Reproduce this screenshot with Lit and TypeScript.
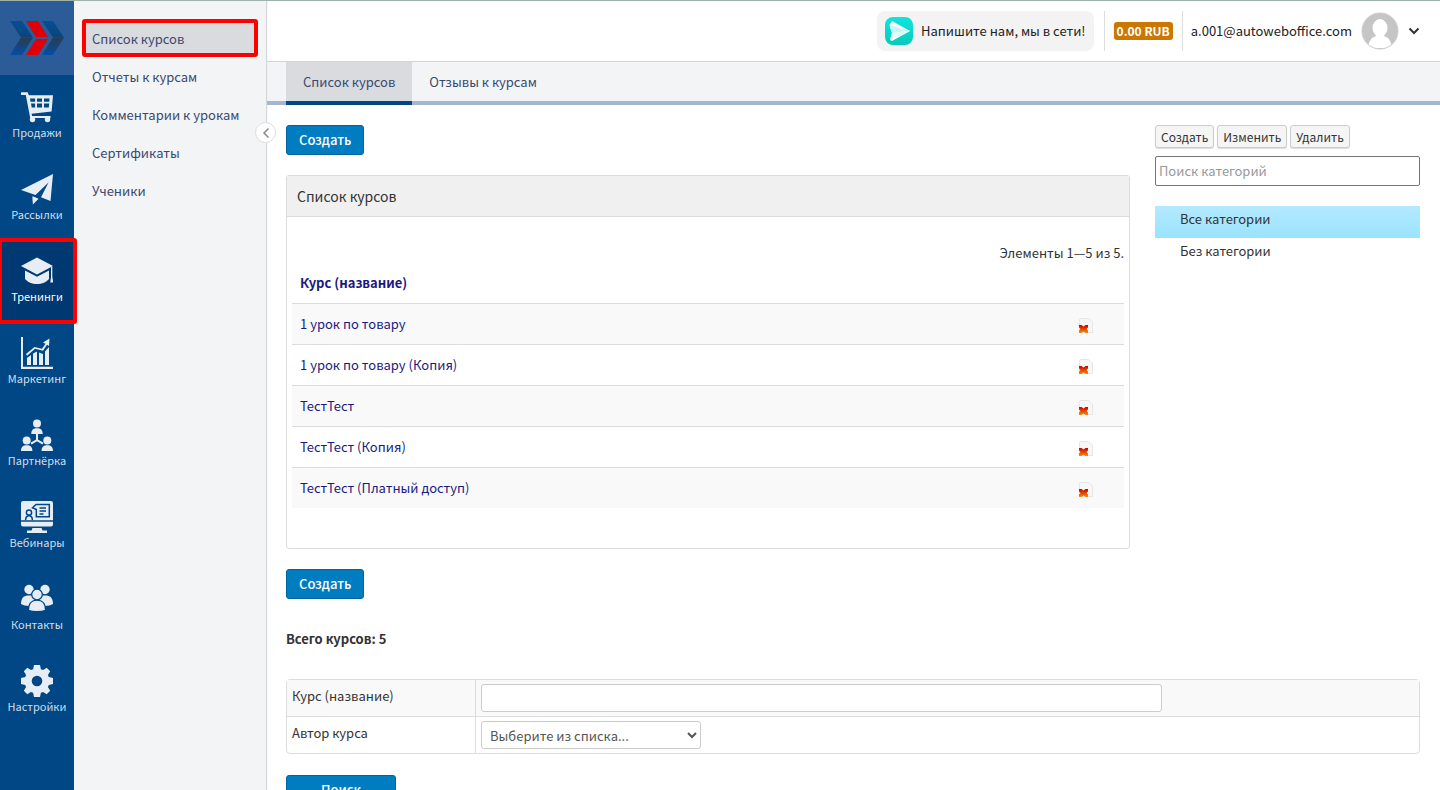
import { LitElement, html, svg, css } from "lit";
import { customElement, state } from "lit/decorators.js";

const icons: Record<string, unknown> = {
  cart: svg`<path d="M1 1.2h5.6l1.3 3H32l-1.4 16.3-20 2.2.5 2.3h18.400v2H9.200L4.800 4H1a1.400 1.400 0 0 1 0-2.800zM9 7.500l.5 3.200h4.600V7.500zm7 0v3.200h5V7.500zm7 0v3.200h5.300l.2-3.200zM10 12.600l.7 3.800h3.400v-3.800zm6 0v3.800h5v-3.800zm7 0v3.800h4.800l.4-3.800z" fill-rule="evenodd"/><circle cx="11.500" cy="28.500" r="2.700"/><circle cx="26.500" cy="28.500" r="2.700"/>`,
  plane: svg`<path d="M32 1 29.500 28 20 24.200 27.500 9.500 14.500 22 0 17zM11.300 23.600l1 0 5.300 2.200-5.700 5.800z"/>`,
  cap: svg`<path d="M16 2.500 32 11 16 19.500 0 11z"/><path d="M4 15.500 16 21.700l12-6.200V24c-2.500 3-7 5-12 5S6.500 27 4 24z"/><path d="M30 12h1.300v10l1 5.500h-3l.7-5.500z"/>`,
  chart: svg`<path d="M0 0h2v29.800h30V32H0zM6 21l4-3v10H6zm6-4.500 4-2V28h-4zm6-1 4 1.500v11h-4zm6-1L28 10v18h-4z"/><path d="m5 17 8.500-7 7.500 1.800 3.500-5-2.500-1.300L28.500 1.500 28 9l-2-1.200-4 6-8-2-8 7z"/>`,
  partners: svg`<circle cx="16" cy="4.500" r="4"/><path d="M10.300 15c0-4 2-5.700 5.700-5.700s5.700 1.700 5.700 5.700zM15 14h2v7.500h-2zM16 20l1 1.700-6.500 3.800-1-1.700zm0 0 6.500 3.800-1 1.700-6.500-3.800z"/><circle cx="5.700" cy="21.500" r="4"/><circle cx="26.300" cy="21.500" r="4"/><path d="M0 32c0-4 2-5.700 5.700-5.700s5.700 1.700 5.700 5.700zM20.600 32c0-4 2-5.700 5.700-5.700S32 28 32 32z"/>`,
  webinar: svg`<path d="M2 0h28a2 2 0 0 1 2 2v17.300H0V2a2 2 0 0 1 2-2zM0 20.800h32v2.700a2 2 0 0 1-2 2H2a2 2 0 0 1-2-2zM11.500 27h9l1 2.500h4.500V32H6v-2.500h4.500z"/><g fill="none" stroke="#014785" stroke-width="1.500"><circle cx="8" cy="11.500" r="2.600"/><path d="M4.600 19.300c0-3 .9-4.600 3.400-4.600s3.400 1.600 3.400 4.600M11.500 6.700l3.500-3.200h13.300v12.300h-13V8.500zM18.500 7h6.500M18.500 10h6.500M18.500 13h4"/></g>`,
  contacts: svg`<circle cx="8" cy="6.500" r="4.700"/><circle cx="24" cy="6.500" r="4.700"/><path d="M0 21c0-6 2.500-8.500 8-8.500h16c5.500 0 8 2.500 8 8.500-2 1.300-5 2-8 2H8c-3 0-6-.7-8-2z"/><g stroke="#014785" stroke-width="1.200"><path d="M7.500 27.200c0-7 3-10 8.500-10s8.500 3 8.500 10c-4.500 2-12.500 2-17 0z"/><circle cx="16" cy="11.500" r="5.300"/></g>`,
  gear: svg`<path fill-rule="evenodd" d="M13 0h6l.9 4.200 2.200.9L25.700 2.800l3.500 3.500-2.300 3.600.9 2.200L32 13v6l-4.200.9-.9 2.200 2.300 3.600-3.500 3.500-3.600-2.300-2.200.9L19 32h-6l-.9-4.200-2.200-.9-3.600 2.300-3.500-3.500 2.300-3.600-.9-2.200L0 19v-6l4.200-.9.9-2.200L2.800 6.300l3.500-3.500 3.600 2.300 2.200-.9zM16 10.700a5.300 5.300 0 1 0 0 10.600 5.300 5.300 0 0 0 0-10.600z"/>`,
};

const sections = [
  { icon: "cart", label: "Продажи" },
  { icon: "plane", label: "Рассылки" },
  { icon: "cap", label: "Тренинги" },
  { icon: "chart", label: "Маркетинг" },
  { icon: "partners", label: "Партнёрка" },
  { icon: "webinar", label: "Вебинары" },
  { icon: "contacts", label: "Контакты" },
  { icon: "gear", label: "Настройки" },
];

const subsections = ["Список курсов", "Отчеты к курсам", "Комментарии к урокам", "Сертификаты", "Ученики"];
const courses = ["1 урок по товару", "1 урок по товару (Копия)", "ТестТест", "ТестТест (Копия)", "ТестТест (Платный доступ)"];
const categories = ["Все категории", "Без категории"];

@customElement("app-root")
export class AppRoot extends LitElement {
  @state() private category = 0;

  static styles = css`
    :host {
      display: block;
      font: 13px/20px "Noto Sans CJK SC", sans-serif;
      color: #333;
    }
    * { box-sizing: border-box; }
    a { color: inherit; text-decoration: none; }
    ul { list-style: none; margin: 0; padding: 0; }
    button, input, select { font: inherit; margin: 0; }
    svg { display: block; }
    .shell {
      display: flex;
      height: 100vh;
      overflow: hidden;
      background: #fff;
      border-top: 1px solid #9fb0aa;
    }
    .rail {
      position: relative;
      z-index: 2;
      flex: none;
      width: 74px;
      background: #014785;
      color: #d3dfea;
    }
    .logo { display: grid; place-items: center; height: 74px; background: #2b5c97; }
    .logo svg { width: 54px; height: 34px; }
    .section {
      position: relative;
      display: flex;
      flex-direction: column;
      align-items: center;
      height: 82px;
      padding-top: 16px;
      font-size: 11px;
      line-height: 18px;
    }
    .section svg { width: 32px; height: 32px; fill: #e6edf4; }
    .section.active { background: #003872; color: #fff; }
    .section.active::after {
      content: "";
      position: absolute;
      z-index: 3;
      inset: -1px -3px -3px -2px;
      border: 4px solid #fe0000;
      border-radius: 3px;
    }
    .submenu {
      position: relative;
      z-index: 1;
      flex: none;
      width: 192px;
      padding: 18px 8px;
      background: #f3f4f6;
      color: #39496f;
      box-shadow: 1px 0 1px #d4d5d7;
    }
    .submenu a {
      display: block;
      height: 38px;
      padding: 6px 6px 4px;
      border: 4px solid transparent;
      border-radius: 3px;
    }
    .submenu a.active { background: #dadbdf; border-color: #fe0000; }
    .collapse {
      position: absolute;
      top: 121px;
      right: -10px;
      display: grid;
      place-items: center;
      width: 21px;
      height: 21px;
      padding: 0;
      border: 1px solid #dcdddf;
      border-radius: 50%;
      background: #fff;
    }
    .main { flex: 1; min-width: 0; overflow-y: auto; scrollbar-width: none; }
    .header {
      display: flex;
      align-items: center;
      justify-content: flex-end;
      height: 61px;
      padding: 0 20px;
      border-bottom: 1px solid #d4d4d4;
    }
    .chat {
      display: flex;
      align-items: center;
      gap: 8px;
      height: 40px;
      padding: 0 8px;
      border-radius: 8px;
      background: #f3f3f3;
      color: #222;
    }
    .chat svg { width: 28px; height: 28px; }
    .balance {
      display: flex;
      align-items: center;
      height: 40px;
      margin: 0 8px 0 10px;
      padding: 0 9px;
      border: solid #ddd;
      border-width: 0 1px;
    }
    .badge {
      height: 18px;
      padding: 0 3px;
      border-radius: 3px;
      background: #cc7700;
      color: #fff;
      font-size: 12px;
      font-weight: 700;
      line-height: 17px;
    }
    .user { display: flex; align-items: center; gap: 9px; padding: 0; border: 0; background: none; color: #222; }
    .tabs {
      display: flex;
      height: 43px;
      padding: 0 20px;
      background: #f3f4f6;
      border-bottom: 4px solid #a4b5cd;
      color: #39496f;
    }
    .tab { height: 43px; padding: 10px 17px; }
    .tab.active { background: #dadbdf; border-bottom: 4px solid #014785; }
    .content { padding: 20px; }
    .columns { display: grid; grid-template-columns: minmax(0, 1fr) 265px; gap: 25px; }
    .primary {
      display: block;
      height: 30px;
      padding: 0 12px;
      border: 1px solid #00639c;
      border-radius: 3px;
      background: #007dc1;
      color: #fff;
      font-weight: 500;
    }
    .search { min-width: 110px; margin-top: 21px; }
    .panel { margin: 20px 0; border: 1px solid #dcdcdc; border-radius: 3px; }
    .panel h2 {
      margin: 0;
      padding: 10px;
      border-bottom: 1px solid #dcdcdc;
      background: #f0f0f0;
      font-size: 14px;
      font-weight: 400;
      line-height: 20px;
    }
    .panel-body { padding: 26px 5px 40px; }
    .summary { margin: 0; text-align: right; }
    .courses { width: 100%; border-collapse: collapse; color: #1a1a7e; }
    .courses th { height: 40px; padding: 0 8px; text-align: left; font-weight: 700; }
    .courses td { height: 41px; padding: 0 8px; border-top: 1px solid #dcdcdc; }
    .courses tbody tr:nth-child(odd) { background: #f9f9f9; }
    .courses .actions { width: 78px; padding: 4px 30px 0 32px; }
    .remove { display: block; padding: 0; border: 0; background: none; }
    .total { margin: 30px 0; font-weight: 700; }
    .filter {
      width: 100%;
      border: 1px solid #dcdcdc;
      border-radius: 4px;
      border-spacing: 0;
    }
    .filter th { width: 188px; padding: 6px 5px; text-align: left; font-weight: 400; vertical-align: top; }
    .filter td { padding: 4px 5px; border-left: 1px solid #dcdcdc; }
    .filter tr:first-child { background: #f9f9f9; }
    .filter tr + tr > * { border-top: 1px solid #dcdcdc; }
    .filter input, .filter select {
      display: block;
      height: 28px;
      border: 1px solid #ccc;
      border-radius: 3px;
      background: #fff;
      color: #555;
    }
    .filter input { width: 73%; }
    .filter select { width: 220px; padding: 0 4px; }
    .tools { display: flex; gap: 3px; }
    .tools button {
      height: 23px;
      padding: 0 5px;
      border: 1px solid #ccc;
      border-radius: 3px;
      background: #f5f5f5;
      color: #333;
      font-size: 12px;
      line-height: 19px;
      box-shadow: 0 1px 1px #ddd;
    }
    .category-search {
      display: block;
      width: 100%;
      height: 30px;
      margin: 8px 0 20px;
      padding: 0 3px 2px;
      border: 1px solid #767676;
      border-radius: 2px;
    }
    .category-search::placeholder { color: #999; }
    .category { display: block; height: 32px; padding: 3px 25px; }
    .category.active { background: linear-gradient(#b4e9ff, #9ae3ff); }
  `;

  render() {
    return html`
      <div class="shell">
        <nav class="rail" aria-label="Разделы">
          <a class="logo" href="#" aria-label="АвтоОфис">
            <svg viewBox="0 0 54 34">
              <defs>
                <linearGradient id="upper" x2="0" y2="1"><stop stop-color="#044f93" /><stop offset="1" stop-color="#0b447c" /></linearGradient>
                <linearGradient id="lower" x2="0" y2="1"><stop stop-color="#2b3c49" /><stop offset="1" stop-color="#024ea8" /></linearGradient>
              </defs>
              <path fill="url(#upper)" d="M0 0h12l11 16.500H11zM32 0h11l11 16.500H43z" />
              <path fill="url(#lower)" d="M11 16.500h12L12 34H0zM43 16.500h11L43 34H32z" />
              <path fill="#e00008" d="M16 0h12l10 16H26zM26 18h12L28 34H16z" />
            </svg>
          </a>
          ${sections.map(
            (s, i) => html`<a class="section ${i === 2 ? "active" : ""}" href="#">
              <svg viewBox="0 0 32 32" aria-hidden="true">${icons[s.icon]}</svg>${s.label}
            </a>`
          )}
        </nav>
        <nav class="submenu" aria-label="Тренинги">
          ${subsections.map((s, i) => html`<a class=${i === 0 ? "active" : ""} href="#">${s}</a>`)}
          <button class="collapse" aria-label="Свернуть меню">
            <svg width="8" height="12" viewBox="0 0 8 12" fill="none" stroke="#888" stroke-width="1.500"><path d="M6.500 1.500 2 6l4.500 4.500" /></svg>
          </button>
        </nav>
        <main class="main">
          <header class="header">
            <a class="chat" href="#">
              <svg viewBox="0 0 28 28" aria-hidden="true">
                <defs><linearGradient id="teal" x2="0" y2="1"><stop stop-color="#0ee6dc" /><stop offset="1" stop-color="#08c9bb" /></linearGradient></defs>
                <rect width="28" height="28" rx="8" fill="url(#teal)" />
                <path fill="#fff" d="M7 4l18 10L7 24l-2-1 2-7-2.500-8z" />
                <path fill="#c5f8f5" d="M4.500 8 25 14 7 16z" /><path fill="#e2fcfa" d="M7 16l18-2L5 23z" />
              </svg>
              Напишите нам, мы в сети!
            </a>
            <div class="balance"><span class="badge">0.00 RUB</span></div>
            <button class="user">
              a.001@autoweboffice.com
              <svg width="38" height="38" viewBox="0 0 38 38" aria-hidden="true">
                <clipPath id="round"><circle cx="19" cy="19" r="18" /></clipPath>
                <circle cx="19" cy="19" r="18" fill="#c5c5c5" />
                <g clip-path="url(#round)" fill="#fff"><ellipse cx="19" cy="16" rx="7.500" ry="9" /><path d="M15 21h8v3c5 1.500 7 5 8 12H7c1-7 3-10.500 8-12z" /></g>
                <circle cx="19" cy="19" r="18" fill="none" stroke="#ccc" />
              </svg>
              <svg width="12" height="8" viewBox="0 0 12 8" fill="none" stroke="#333" stroke-width="2"><path d="m1.500 1.500 4.500 4.500 4.500-4.500" /></svg>
            </button>
          </header>
          <nav class="tabs" aria-label="Курсы">
            <a class="tab active" href="#">Список курсов</a>
            <a class="tab" href="#">Отзывы к курсам</a>
          </nav>
          <div class="content">
            <div class="columns">
              <section>
                <button class="primary">Создать</button>
                <div class="panel">
                  <h2>Список курсов</h2>
                  <div class="panel-body">
                    <p class="summary">Элементы 1—5 из 5.</p>
                    <table class="courses">
                      <thead><tr><th colspan="2"><a href="#">Курс (название)</a></th></tr></thead>
                      <tbody>
                        ${courses.map(
                          (c) => html`<tr>
                            <td><a href="#">${c}</a></td>
                            <td class="actions">
                              <button class="remove" aria-label="Удалить">
                                <svg width="16" height="16" viewBox="0 0 16 16">
                                  <defs><linearGradient id="fire" x2="0" y2="1"><stop stop-color="#c80000" /><stop offset="1" stop-color="#ff8c00" /></linearGradient></defs>
                                  <path d="M3 .500h7.500L14.500 4v10.500H3a1.500 1.500 0 0 1-1.500-1.500V2A1.500 1.500 0 0 1 3 .500z" fill="#f7f7f7" stroke="#e6e6e6" />
                                  <path d="M1 7h2.500l2 1.500 2-1.500H10v2.500L8.500 11l1.500 1.500V15H7.500l-2-1.500-2 1.500H1v-2.500L2.500 11 1 9.500z" fill="url(#fire)" />
                                </svg>
                              </button>
                            </td>
                          </tr>`
                        )}
                      </tbody>
                    </table>
                  </div>
                </div>
                <button class="primary">Создать</button>
              </section>
              <aside>
                <div class="tools"><button>Создать</button><button>Изменить</button><button>Удалить</button></div>
                <input class="category-search" type="text" aria-label="Поиск категорий" placeholder="Поиск категорий" />
                <ul>
                  ${categories.map(
                    (c, i) => html`<li><a class="category ${i === this.category ? "active" : ""}" href="#" @click=${() => (this.category = i)}>${c}</a></li>`
                  )}
                </ul>
              </aside>
            </div>
            <p class="total">Всего курсов: 5</p>
            <table class="filter">
              <tr><th><label for="name">Курс (название)</label></th><td><input id="name" type="text" /></td></tr>
              <tr><th><label for="author">Автор курса</label></th><td><select id="author"><option>Выберите из списка...</option></select></td></tr>
            </table>
            <button class="primary search">Поиск</button>
          </div>
        </main>
      </div>
    `;
  }
}
